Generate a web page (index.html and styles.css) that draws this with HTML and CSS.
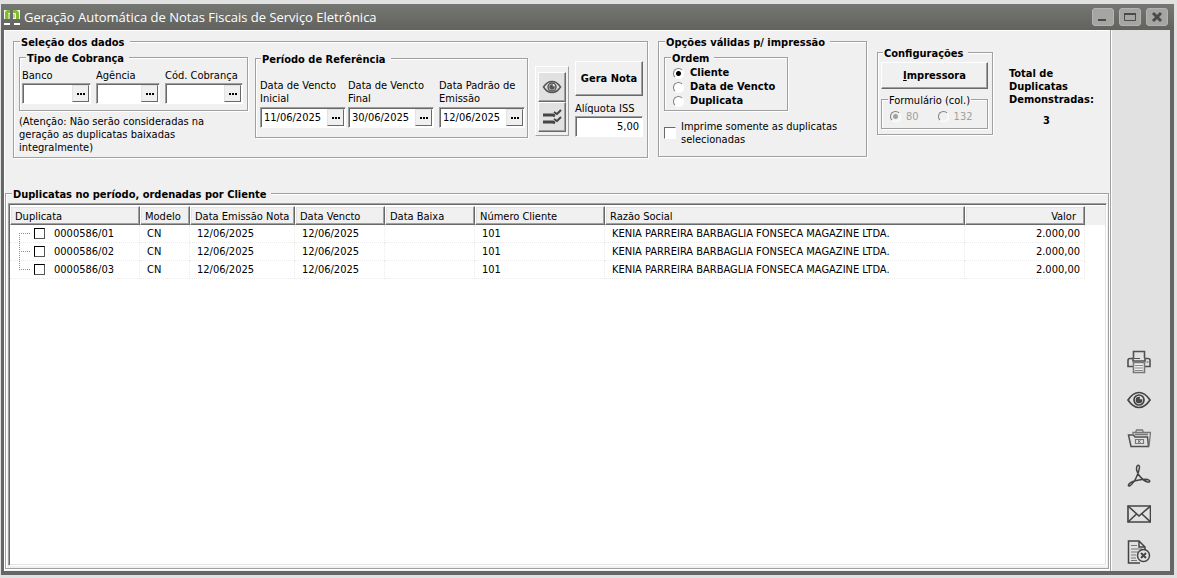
FILE: index.html
```html
<!DOCTYPE html>
<html lang="pt-BR">
<head>
<meta charset="utf-8">
<title>Geração Automática de Notas Fiscais de Serviço Eletrônica</title>
<link rel="stylesheet" href="styles.css">
</head>
<body>
<div class="window">
  <header class="titlebar">
    <svg class="logo" width="16" height="17" viewBox="0 0 16 17">
      <path d="M0 1h6v9H0zM9 1h7v9H9z" fill="#f4f8ee"/>
      <path d="M1 10V4q0-3 3-3h2v3H5q-1 0-1 1v5zM9 1h2q4 0 4 4v5h-3V5q0-1-1-1H9z" fill="#7fbc2e"/>
      <path d="M4 5h2v5H4zM9 5h2v4H9z" fill="#b4d98a"/>
      <path d="M0 14h6v2H0zM10 14h6v2h-6z" fill="#fff"/>
    </svg>
    <h1 class="title">Geração Automática de Notas Fiscais de Serviço Eletrônica</h1>
    <div class="win-buttons">
      <button class="win-button" type="button" aria-label="Minimizar"><svg width="16" height="14" viewBox="0 0 16 14"><path d="M3 9h8v2H3z" fill="#4a4a4a"/></svg></button>
      <button class="win-button" type="button" aria-label="Maximizar"><svg width="16" height="14" viewBox="0 0 16 14"><path d="M2.500 3.500h11v7h-11z" fill="none" stroke="#4a4a4a"/><path d="M2 3h12v2H2z" fill="#4a4a4a"/></svg></button>
      <button class="win-button" type="button" aria-label="Fechar"><svg width="16" height="14" viewBox="0 0 16 14"><path d="M4 3l8 8M12 3l-8 8" stroke="#4a4a4a" stroke-width="3"/></svg></button>
    </div>
  </header>
  <div class="body">
    <main class="main">
      <form class="filters">
        <fieldset class="group selection">
          <legend>Seleção dos dados</legend>
          <div class="selection-row">
            <div class="billing-col">
              <fieldset class="group billing">
                <legend>Tipo de Cobrança</legend>
                <div class="fields billing-fields">
                  <div class="field"><label for="banco">Banco</label><span class="combo bank"><input id="banco" type="text"><button type="button" class="dots" aria-label="Buscar banco"><i></i><i></i><i></i></button></span></div>
                  <div class="field"><label for="agencia">Agência</label><span class="combo agency"><input id="agencia" type="text"><button type="button" class="dots" aria-label="Buscar agência"><i></i><i></i><i></i></button></span></div>
                  <div class="field"><label for="cod">Cód. Cobrança</label><span class="combo code"><input id="cod" type="text"><button type="button" class="dots" aria-label="Buscar código"><i></i><i></i><i></i></button></span></div>
                </div>
              </fieldset>
              <p class="note">(Atenção: Não serão consideradas na<br>geração as duplicatas baixadas<br>integralmente)</p>
            </div>
            <fieldset class="group period">
              <legend>Período de Referência</legend>
              <div class="fields period-fields">
                <div class="field"><label for="ini">Data de Vencto<br>Inicial</label><span class="combo date"><input id="ini" type="text" value="11/06/2025"><button type="button" class="dots" aria-label="Calendário"><i></i><i></i><i></i></button></span></div>
                <div class="field"><label for="fim">Data de Vencto<br>Final</label><span class="combo date"><input id="fim" type="text" value="30/06/2025"><button type="button" class="dots" aria-label="Calendário"><i></i><i></i><i></i></button></span></div>
                <div class="field"><label for="emi">Data Padrão de<br>Emissão</label><span class="combo date"><input id="emi" type="text" value="12/06/2025"><button type="button" class="dots" aria-label="Calendário"><i></i><i></i><i></i></button></span></div>
              </div>
            </fieldset>
            <div class="tool-panel">
              <button type="button" class="raised tool" aria-label="Visualizar"><svg width="20" height="14" viewBox="0 0 20 14" fill="none" stroke="#555" stroke-width="1.500"><path d="M1.500 7Q5 1.500 10 1.500T18.500 7q-3.500 5.500-8.500 5.500T1.500 7z"/><circle cx="10" cy="7" r="4"/><path d="M10 5a2 2 0 1 0 2 2h-2z" fill="#555"/></svg></button>
              <button type="button" class="raised tool" aria-label="Marcar todas"><svg width="20" height="16" viewBox="0 0 20 16" fill="none" stroke="#444"><path d="M1 6h10l2 1M1 13h10l2 1" stroke-width="3"/><path d="M12 3l3 2 4-4M12 10l3 2 4-4" stroke-width="2"/></svg></button>
            </div>
            <div class="action-col">
              <button type="button" class="raised generate">Gera Nota</button>
              <label for="iss">Alíquota ISS</label>
              <span class="combo"><input id="iss" class="amount" type="text" value="5,00"></span>
            </div>
          </div>
        </fieldset>

        <fieldset class="group print-options">
          <legend>Opções válidas p/ impressão</legend>
          <fieldset class="group order">
            <legend>Ordem</legend>
            <label><input type="radio" name="ordem" checked>Cliente</label>
            <label><input type="radio" name="ordem">Data de Vencto</label>
            <label><input type="radio" name="ordem">Duplicata</label>
          </fieldset>
          <label class="only-selected"><input type="checkbox" class="check"><span>Imprime somente as duplicatas<br>selecionadas</span></label>
        </fieldset>

        <fieldset class="group config">
          <legend>Configurações</legend>
          <button type="button" class="raised printer"><u>I</u>mpressora</button>
          <fieldset class="group form-size" disabled>
            <legend>Formulário (col.)</legend>
            <label><input type="radio" name="col" checked>80</label>
            <label><input type="radio" name="col">132</label>
          </fieldset>
        </fieldset>

        <div class="total">
          <span>Total de<br>Duplicatas<br>Demonstradas:</span>
          <output class="total-value">3</output>
        </div>
      </form>

      <fieldset class="group results">
        <legend>Duplicatas no período, ordenadas por Cliente</legend>
        <div class="grid">
          <table class="table">
            <colgroup><col class="c-dup"><col class="c-mod"><col class="c-emi"><col class="c-ven"><col class="c-ven"><col class="c-num"><col class="c-name"><col class="c-val"><col></colgroup>
            <thead><tr><th>Duplicata</th><th>Modelo</th><th>Data Emissão Nota</th><th>Data Vencto</th><th>Data Baixa</th><th>Número Cliente</th><th>Razão Social</th><th class="right">Valor</th><td class="rest"></td></tr></thead>
            <tbody>
              <tr><td><label class="tree"><input type="checkbox" class="row-check">0000586/01</label></td><td>CN</td><td>12/06/2025</td><td>12/06/2025</td><td></td><td>101</td><td>KENIA PARREIRA BARBAGLIA FONSECA MAGAZINE LTDA.</td><td class="right">2.000,00</td><td class="rest"></td></tr>
              <tr><td><label class="tree"><input type="checkbox" class="row-check">0000586/02</label></td><td>CN</td><td>12/06/2025</td><td>12/06/2025</td><td></td><td>101</td><td>KENIA PARREIRA BARBAGLIA FONSECA MAGAZINE LTDA.</td><td class="right">2.000,00</td><td class="rest"></td></tr>
              <tr><td><label class="tree"><input type="checkbox" class="row-check">0000586/03</label></td><td>CN</td><td>12/06/2025</td><td>12/06/2025</td><td></td><td>101</td><td>KENIA PARREIRA BARBAGLIA FONSECA MAGAZINE LTDA.</td><td class="right">2.000,00</td><td class="rest"></td></tr>
            </tbody>
          </table>
        </div>
      </fieldset>
    </main>

    <aside class="sidebar">
      <button type="button" class="side" aria-label="Imprimir"><svg width="24" height="24" viewBox="0 0 24 24" fill="none" stroke="#505050" stroke-width="1.600"><path d="M6.500 8V1.500h11V8"/><path d="M6 16.500H1V10.500Q1 8.500 3 8.500h3v2.500h12V8.500h3q2 0 2 2v6h-5"/><path d="M6.500 12.500h11v10h-11z" fill="#eee" stroke="#777"/><path d="M8 15.500h8M8 18h8M8 20.500h8" stroke="#888" stroke-width="1.200"/><path d="M7 8.500h6M19.500 12h2" stroke-width="1.200"/></svg></button>
      <button type="button" class="side" aria-label="Visualizar"><svg width="24" height="24" viewBox="0 0 24 24" fill="none" stroke="#444" stroke-width="1.700"><path d="M1 12Q6 4.500 12 4.500T23 12q-5 7.500-11 7.500T1 12z"/><circle cx="12" cy="12" r="5"/><path d="M12 9.500a2.500 2.500 0 1 0 2.500 2.500H12z" fill="#555"/></svg></button>
      <button type="button" class="side" aria-label="Abrir"><svg width="24" height="24" viewBox="0 0 24 24" fill="none" stroke="#505050" stroke-width="1.500"><path d="M1.500 9h5l1.500 2h12.500l1 9.500H4z"/><path d="M6 8.500V6.500h2.500l1-2.500h6l1 2.500h7L22 20M8 6.500h9M8 8.500h13" stroke="#777" stroke-width="1.300"/><path d="M8.500 13.500h8v4h-8z" stroke="#777" stroke-width="1.200"/><path d="M11 14.500l2.500 2m0-2l-2.500 2" stroke-width="1"/></svg></button>
      <button type="button" class="side" aria-label="Gerar PDF"><svg width="24" height="24" viewBox="0 0 24 24" fill="none" stroke="#444" stroke-width="1.500"><path d="M10.500 1.500q2-1 2 2Q12 8 9 14t-6.500 8q-2 0-.5-2 2-2.500 10-4t10.500.5q1 2-2 1.500-4-1-7.500-5.500t-3.500-8q0-2 1-3z"/></svg></button>
      <button type="button" class="side" aria-label="Enviar e-mail"><svg width="24" height="24" viewBox="0 0 24 24" fill="none" stroke="#444" stroke-width="1.600"><path d="M1 4h22.500v16H1z"/><path d="M1 4l11 10L23.500 4M1 20l8.500-8M23.500 20L15 12"/></svg></button>
      <button type="button" class="side" aria-label="Cancelar documento"><svg width="24" height="24" viewBox="0 0 24 24" fill="none" stroke="#444" stroke-width="1.500"><path d="M13 23H1.500V1H12l6 6v3M12 1v6h6"/><path d="M4 5.500h6M4 9h11M4 12h7M4 15h5M4 18h5M4 20.500h6" stroke="#777" stroke-width="1.200"/><circle cx="16.500" cy="15.500" r="6" fill="#e4e4e4"/><path d="M14 13l5 5m0-5l-5 5" stroke-width="2"/></svg></button>
    </aside>
  </div>
</div>
</body>
</html>
```
FILE: styles.css
```css
* { box-sizing: border-box; }

body {
  margin: 0;
  background: #e1e1e1;
  color: #000;
  font-family: "DejaVu Sans Condensed", "DejaVu Sans", sans-serif;
  font-size: 11px;
  line-height: 13px;
}

input, button { font: inherit; color: inherit; margin: 0; }
button { padding: 0; }

.window {
  display: flex;
  flex-direction: column;
  height: 100vh;
  padding: 4px 3px 3px 1px;
}

.titlebar {
  display: flex;
  align-items: center;
  flex: none;
  padding: 0 6px 0 3px;
  height: 26px;
  background: linear-gradient(#757772, #62625e);
}
.logo { flex: none; }
.title {
  flex: 1;
  margin: 0 0 0 4px;
  color: #fff;
  font: 400 13px/20px "Open Sans", "Noto Sans", sans-serif;
}
.win-buttons { display: flex; gap: 5px; }
.win-button {
  display: grid;
  place-items: center;
  width: 22px;
  height: 18px;
  border: 1px solid #b4b4b2;
  border-radius: 3px;
  background: #a5a5a3;
}

.body {
  display: flex;
  flex: 1;
  min-height: 0;
  border: solid #666;
  border-width: 0 4px 4px 3px;
  background: #f0f0f0;
  box-shadow: inset 1px 1px 0 #fff;
}

.main {
  display: flex;
  flex: 1;
  flex-direction: column;
  min-width: 0;
  padding: 3px 1px 2px 1px;
  border-right: 1px solid #a0a0a0;
}

.group {
  min-width: 0;
  margin: 0;
  padding: 0;
  border: 1px solid #a0a0a0;
  box-shadow: 1px 1px 0 #fff, inset 1px 1px 0 #fff;
}
.group > legend {
  margin-left: 1px;
  padding: 4px 5px 0 1px;
  background: #f0f0f0;
  font-weight: 700;
  line-height: 12px;
  white-space: nowrap;
}

.filters {
  display: flex;
  align-items: flex-start;
  flex: none;
  padding: 0 0 27px 8px;
  white-space: nowrap;
}

.selection { flex: none; width: 635px; padding: 0 4px 3px 5px; }
.selection-row { display: flex; align-items: flex-start; }
.billing-col { width: 229px; }
.billing { padding: 4px 2px 6px; }
.billing > legend { margin-left: 4px; }
.fields { display: flex; }
.field { display: flex; flex-direction: column; }
.billing-fields { gap: 5px; }
.billing .field { gap: 1px; }

.combo {
  display: flex;
  height: 21px;
  padding: 1px;
  border: 1px solid;
  border-color: #a0a0a0 #fff #fff #a0a0a0;
  background: #fff;
  box-shadow: inset 1px 1px 0 #696969;
}
.combo input {
  flex: 1;
  min-width: 0;
  width: 0;
  padding: 0 2px;
  border: 0;
  outline: 0;
  background: none;
}
.bank { width: 69px; }
.agency { width: 64px; }
.code { width: 78px; }
.date { width: 86px; }
.dots {
  display: flex;
  align-items: center;
  justify-content: center;
  gap: 1px;
  width: 17px;
  border: 1px solid;
  border-color: #e3e3e3 #696969 #696969 #e3e3e3;
  background: #f0f0f0;
}
.dots i { width: 2px; height: 2px; background: #000; }

.note { margin: 4px 0 0; }

.period { width: 273px; margin: 1px 0 0 7px; padding: 13px 2px 9px 4px; }
.period-fields { gap: 2px; }
.period-fields .field:last-child { margin-left: auto; }
.period .field { gap: 2px; }

.raised {
  border: 1px solid;
  border-color: #fff #696969 #696969 #fff;
  background: #f0f0f0;
  box-shadow: inset -1px -1px 0 #a0a0a0;
  font-weight: 700;
}
.tool-panel {
  display: flex;
  flex-direction: column;
  width: 34px;
  margin: 17px 0 0 7px;
  padding: 5px 2px 3px;
  border: 1px solid;
  border-color: #fff #a0a0a0 #a0a0a0 #fff;
}
.tool {
  display: grid;
  place-items: center;
  height: 30px;
  background: #e1e1e1;
}
.action-col {
  display: flex;
  flex-direction: column;
  flex: 1;
  margin: 12px 0 0 6px;
}
.generate { height: 35px; margin-bottom: 6px; }
.action-col label { margin-bottom: 1px; }
.amount { text-align: right; }

input[type="radio"] {
  appearance: none;
  flex: none;
  width: 11px;
  height: 11px;
  border: 1px solid;
  border-color: #808080 #fff #fff #808080;
  border-radius: 50%;
  background: #fff;
}
input[type="radio"]:checked { background: radial-gradient(circle, #000 2px, #fff 3px); }

.print-options { width: 209px; margin-left: 10px; padding: 0 5px 10px; }
.order { width: 124px; padding: 1px 8px 2px; }
.order > legend { margin-left: -2px; }
.order label {
  display: flex;
  align-items: center;
  gap: 6px;
  font-weight: 700;
  line-height: 14px;
}
.only-selected { display: flex; align-items: center; gap: 5px; margin-top: 9px; }
.check {
  appearance: none;
  width: 12px;
  height: 12px;
  border: 1px solid;
  border-color: #696969 #fff #fff #696969;
  background: #fff;
}

.config { width: 116px; margin: 11px 0 0 10px; padding: 2px 4px 5px 3px; }
.config > legend { margin-left: 2px; }
.printer { display: block; width: 100%; height: 27px; margin-bottom: 2px; }
.form-size {
  display: flex;
  gap: 19px;
  padding: 3px 8px 5px;
  color: #a0a0a0;
}
.form-size > legend { margin-left: -2px; padding-right: 1px; color: #000; font-weight: 400; }
.form-size label { display: flex; align-items: center; gap: 5px; }
.form-size input[type="radio"] { background: #f0f0f0; }
.form-size input[type="radio"]:checked { background: radial-gradient(circle, #a0a0a0 2px, #f0f0f0 3px); }

.total {
  display: flex;
  flex-direction: column;
  gap: 8px;
  margin: 34px 0 0 16px;
  font-weight: 700;
}
.total-value { align-self: center; margin-right: 10px; }

.results { flex: 1; min-height: 0; padding: 2px 1px 2px 2px; }
.results > legend { margin-left: 4px; }
.grid {
  height: 100%;
  padding: 2px 1px 1px;
  border: 1px solid;
  border-color: #a0a0a0 #fff #fff #a0a0a0;
  background: #fff;
  box-shadow: inset 1px 1px 0 #696969, inset -1px -1px 0 #e3e3e3;
}
.table {
  width: 100%;
  table-layout: fixed;
  border-collapse: separate;
  border-spacing: 0;
  white-space: nowrap;
}
.c-dup { width: 130px; }
.c-mod { width: 50px; }
.c-emi { width: 105px; }
.c-ven { width: 90px; }
.c-num { width: 130px; }
.c-name { width: 360px; }
.c-val { width: 120px; }
.table th {
  height: 19px;
  padding: 1px 5px 0 4px;
  border: 1px solid;
  border-color: #fff #696969 #696969 #fff;
  background: #f0f0f0;
  box-shadow: inset -1px -1px 0 #a0a0a0, inset 1px 1px 0 #e3e3e3;
  font-weight: 400;
  text-align: left;
}
.table th.right { padding-right: 8px; text-align: right; }
.table thead .rest { background: #f0f0f0; }
.table tbody td {
  height: 18px;
  padding: 0 4px 0 7px;
  border: 1px dotted #ebebeb;
  border-width: 0 1px 1px 0;
}
.table tbody td:first-child { padding: 0; }
.table tbody .right { text-align: right; }
.table tbody .rest { border: 0; }
.tree {
  display: flex;
  align-items: center;
  height: 17px;
  margin-left: 9px;
}
.tree::before {
  content: "";
  width: 10px;
  height: 17px;
  margin-right: 4px;
  border-left: 1px dotted #909090;
  background: repeating-linear-gradient(90deg, transparent 0 1px, #909090 1px 2px) 0 8px / 100% 1px no-repeat;
}
tr:first-child .tree::before {
  align-self: flex-end;
  height: 9px;
  background-position: 0 0;
}
tr:last-child .tree::before {
  align-self: flex-start;
  height: 9px;
}
.row-check {
  appearance: none;
  width: 11px;
  height: 11px;
  margin-right: 9px;
  border: 1px solid;
  border-color: #000 #555 #555 #000;
  background: #fff;
}

.sidebar {
  display: flex;
  flex: none;
  flex-direction: column;
  justify-content: flex-end;
  gap: 14px;
  width: 59px;
  padding: 0 0 7px 15px;
  border-left: 1px solid #fff;
  background: #e1e1e1;
}
.side {
  width: 24px;
  height: 24px;
  border: 0;
  background: none;
}
.side svg { display: block; }
```
